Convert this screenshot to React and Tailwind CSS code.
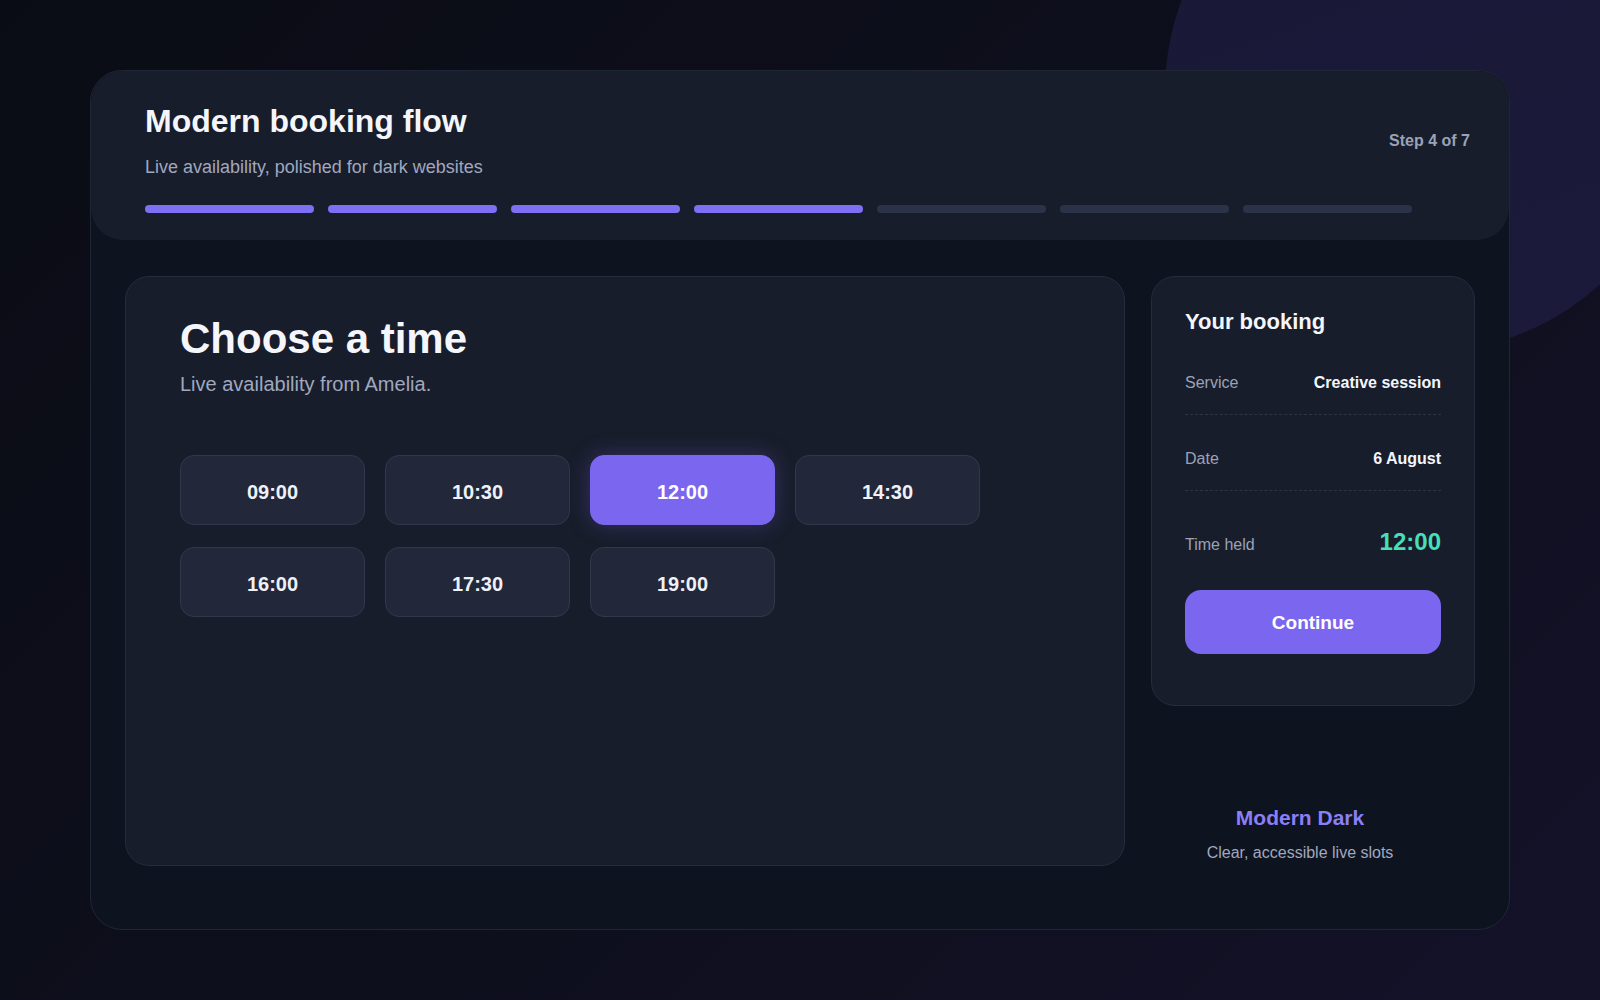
export default function App() {
  const slots = ["09:00", "10:30", "12:00", "14:30", "16:00", "17:30", "19:00"];
  const bars = [true, true, true, true, false, false, false];
  return (
    <div className="relative w-[1600px] h-[1000px] overflow-hidden flex items-center justify-center bg-[linear-gradient(135deg,#0a0c15_0%,#0e0f1d_55%,#141229_100%)] font-['Liberation_Sans',Arial,sans-serif]">
      <div className="absolute left-[1165px] top-[-168px] w-[520px] h-[520px] rounded-full bg-[linear-gradient(160deg,#1a1836_0%,#1c1a3b_100%)]" />
      <div className="relative w-[1420px] h-[860px] rounded-[32px] border border-[#1f2636] bg-[#0e1320] overflow-hidden flex flex-col">
        <header className="h-[169px] shrink-0 rounded-[32px] bg-[#181d2b] pl-[54px] pr-[39px] pt-[31px]">
          <div className="flex items-center justify-between">
            <div>
              <h1 className="text-[32px] leading-[38px] font-bold text-[#f4f6fb]">Modern booking flow</h1>
              <p className="mt-[13px] text-[18px] leading-[28px] text-[#a0a8bf]">Live availability, polished for dark websites</p>
            </div>
            <div className="text-[16px] leading-[24px] font-bold text-[#9aa2b8] -mt-[2px]">Step 4 of 7</div>
          </div>
          <div className="mt-[24px] flex gap-[14px] w-[1267px]">
            {bars.map((on, i) => (
              <div key={i} className={on ? "flex-1 h-[8px] rounded-full bg-[#7f6ff5]" : "flex-1 h-[8px] rounded-full bg-[#2b3348]"} />
            ))}
          </div>
        </header>
        <div className="flex px-[34px] pt-[36px]">
          <section className="w-[1000px] h-[590px] rounded-[24px] border border-[#252c3d] bg-[#181d2b] pl-[54px] pt-[37px]">
            <h2 className="text-[42px] leading-[50px] font-bold text-[#f4f6fb]">Choose a time</h2>
            <p className="mt-[6px] text-[20px] leading-[28px] text-[#a0a8bf]">Live availability from Amelia.</p>
            <div className="mt-[57px] grid grid-cols-[repeat(4,185px)] gap-x-[20px] gap-y-[22px]">
              {slots.map((s) => (
                <button
                  key={s}
                  className={
                    s === "12:00"
                      ? "h-[70px] pt-[3px] rounded-[14px] border border-[#7b66f0] bg-[#7b66f0] text-[20px] font-bold text-white shadow-[0_0_22px_rgba(124,104,242,0.28)]"
                      : "h-[70px] pt-[3px] rounded-[14px] border border-[#30384b] bg-[#222839] text-[20px] font-bold text-[#eef1f8]"
                  }
                >
                  {s}
                </button>
              ))}
            </div>
          </section>
          <aside className="w-[350px] h-[590px] flex flex-col justify-between items-end">
            <div className="w-[324px] rounded-[24px] border border-[#252c3d] bg-[#181d2b] px-[33px] pt-[31px] pb-[51px]">
              <h3 className="text-[22px] leading-[28px] font-bold text-[#f4f6fb]">Your booking</h3>
              <div className="mt-[35px] flex justify-between items-center pb-[19px] border-b border-dashed border-[#2c3446]">
                <span className="text-[16px] leading-[24px] text-[#9ba3b7]">Service</span>
                <span className="text-[16px] leading-[24px] font-bold text-[#f4f6fb]">Creative session</span>
              </div>
              <div className="pt-[32px] flex justify-between items-center pb-[19px] border-b border-dashed border-[#2c3446]">
                <span className="text-[16px] leading-[24px] text-[#9ba3b7]">Date</span>
                <span className="text-[16px] leading-[24px] font-bold text-[#f4f6fb]">6 August</span>
              </div>
              <div className="pt-[35px] flex justify-between items-baseline">
                <span className="text-[16px] leading-[24px] text-[#9ba3b7]">Time held</span>
                <span className="text-[24px] leading-[32px] font-bold text-[#45dfb8]">12:00</span>
              </div>
              <button className="mt-[32px] w-full h-[64px] pt-[3px] rounded-[16px] bg-[#7b66f0] text-[19px] font-bold text-white">Continue</button>
            </div>
            <div className="w-full text-center pb-[1px]">
              <div className="text-[21px] leading-[28px] font-bold text-[#8b7ff5]">Modern Dark</div>
              <div className="mt-[9px] text-[16px] leading-[24px] text-[#a0a8bf]">Clear, accessible live slots</div>
            </div>
          </aside>
        </div>
      </div>
    </div>
  );
}
